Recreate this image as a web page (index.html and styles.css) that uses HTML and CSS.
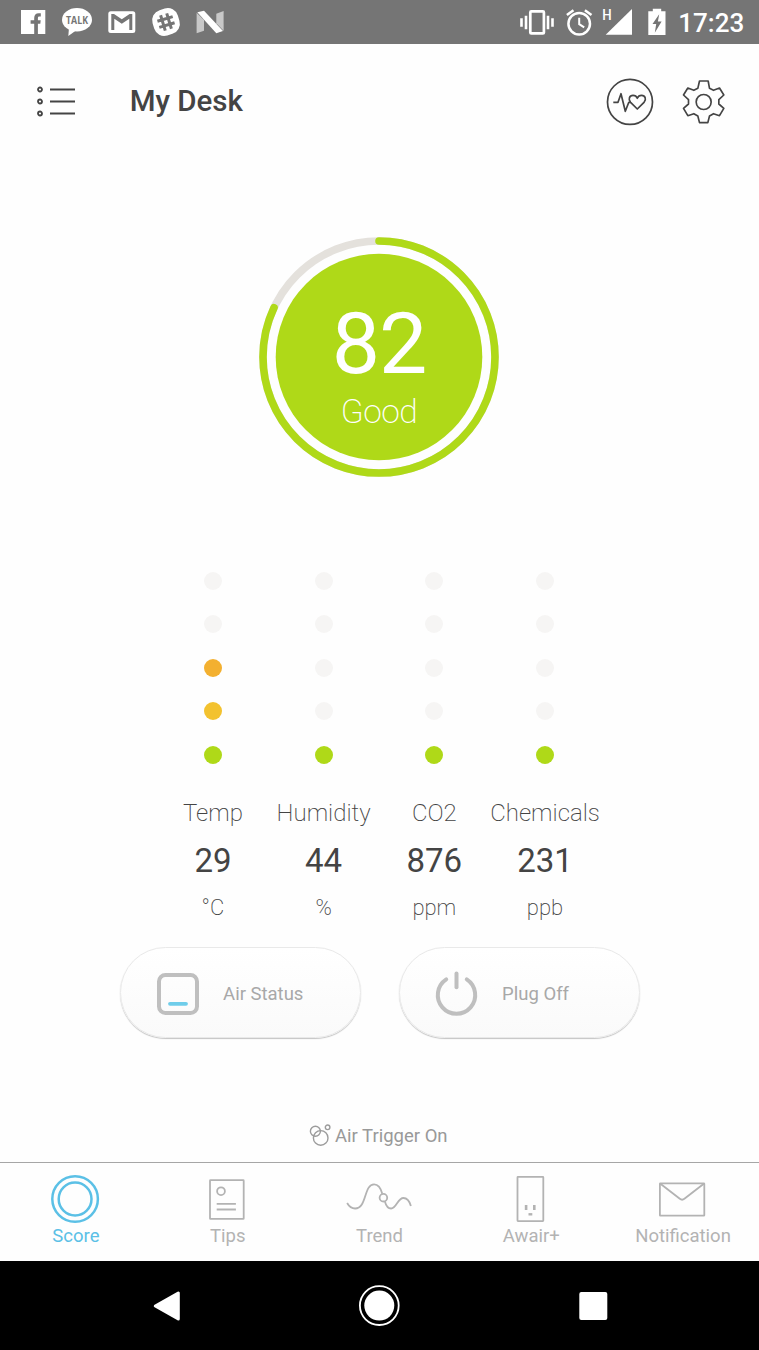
FILE: index.html
```html
<!DOCTYPE html>
<html lang="en">
<head>
  <meta charset="UTF-8" />
  <meta name="viewport" content="width=device-width, initial-scale=1.0"/>
  <title>My Desk</title>
  <link rel="stylesheet" href="styles.css">
</head>
<body>

<!-- Android status bar -->
<div class="status-bar">
  <div class="status-left">
    <svg width="30" height="30" viewBox="0 0 30 30">
      <rect x="3" y="3" width="24.3" height="24" fill="#fff"/>
      <path class="cut" d="M16.2 27V16.8H12.6V13.3H16.2V11Q16.2 6.2 20.7 6.2H22.8V9.6H21.2Q19.9 9.6 19.9 11V13.3H22.7L22.3 16.8H19.9V27Z"/>
    </svg>
    <svg width="30" height="30" viewBox="0 0 30 30">
      <ellipse cx="15" cy="12.7" rx="15" ry="11.7" fill="#fff"/>
      <path d="M7 21L6.3 29L14 23.5Z" fill="#fff"/>
      <text class="talk" x="15" y="17" textLength="22" lengthAdjust="spacingAndGlyphs">TALK</text>
    </svg>
    <svg width="30" height="30" viewBox="0 0 30 30">
      <rect x="1.3" y="4.3" width="27" height="21.7" rx="2.5" fill="#fff"/>
      <path class="cut" d="M4.3 23V7H7L14.8 12.3L22.6 7H25.3V23H22.3V11.8L14.8 16.8L7.3 11.8V23Z"/>
    </svg>
    <svg width="30" height="30" viewBox="0 0 30 30">
      <g transform="rotate(-17 15 15)">
        <rect x="1.8" y="1.8" width="26.4" height="26.4" rx="10.5" fill="#fff"/>
        <path d="M11.8 7V23M18.2 7V23M7 11.8H23M7 18.2H23" stroke="#757575" stroke-width="3"/>
      </g>
    </svg>
    <svg width="30" height="30" viewBox="0 0 30 30" fill="#fff">
      <path d="M1.6 5.7V26.3L9 23.7V13Z" opacity=".6"/>
      <path d="M21.3 6.7L28.6 4V23.7L21.3 16.3Z" opacity=".6"/>
      <path d="M2.3 5.3L9 3.7L28 24L21.3 26.3Z"/>
    </svg>
  </div>
  <div class="status-right">
    <svg width="34" height="30" viewBox="0 0 34 30">
      <rect x="10.3" y="4.4" width="13.6" height="22" rx="1" fill="none" stroke="#fff" stroke-width="2.7"/>
      <path d="M6 8.7V22.3M1.5 11.3V19.7M28 8.7V22.3M32.5 11.3V19.7" stroke="#fff" stroke-width="2.6"/>
    </svg>
    <svg width="26" height="30" viewBox="0 0 26 30" fill="none" stroke="#fff" stroke-width="2.5">
      <circle cx="13.2" cy="16.7" r="10.8"/>
      <path d="M.9 8L7.5 3.2M25.5 8L18.9 3.2"/>
      <path d="M13.2 10.8V17.2L18.2 20.3" stroke-width="2"/>
    </svg>
    <svg width="32.7" height="30" viewBox="0 0 32.7 30" fill="#fff">
      <path d="M2.7 27.7L29 2V27.7Z"/>
      <text class="net" x="-.8" y="13.4" textLength="9.4" lengthAdjust="spacingAndGlyphs">H</text>
    </svg>
    <svg width="18" height="30" viewBox="0 0 18 30">
      <path d="M.3 4.2H4.8V1.8H13.2V4.2H17.5V28H.3Z" fill="#fff"/>
      <path class="cut" d="M11.2 7.2L4.5 17H8.2L6.8 25.7L13.6 14.6H9.9Z"/>
    </svg>
    <span class="clock">17:23</span>
  </div>
</div>

<header>
  <svg class="menu-icon" width="42" height="32" viewBox="0 .5 42 32" fill="none" stroke="#444" stroke-width="1.8">
    <circle cx="5" cy="4" r="2"/><circle cx="5" cy="16" r="2"/><circle cx="5" cy="28" r="2"/>
    <path d="M15 4H40M15 16H40M15 28H40"/>
  </svg>
  <h1>My Desk</h1>
  <div class="header-actions">
    <svg width="50" height="50" viewBox="0 0 50 50" fill="none" stroke="#444" stroke-width="1.7" stroke-linejoin="round">
      <circle cx="25" cy="24.9" r="22.5"/>
      <path d="M8.3 25.3H13L16 16.7L20.3 34.3L23.8 25.3H25.6"/>
      <path d="M32.3 32L25.6 25.3C22.8 22.3 24.5 18.4 28 18.4C30.2 18.4 31.7 19.8 32.3 21.3C32.9 19.8 34.4 18.4 36.6 18.4C40.1 18.4 41.8 22.3 39 25.3Z"/>
    </svg>
    <svg width="50" height="50" viewBox="1.5 0 150 150" fill="none" stroke="#444" stroke-width="5" stroke-linejoin="round">
      <path d="M63 12H89L93 34L105 40L123 33L136 54L121 68V81L136 94L123 116L105 110L93 117L88 137H63L58 117L46 110L28 116L15 94L30 81V68L15 54L28 33L46 40L58 34Z"/>
      <circle cx="75.5" cy="75" r="22.5"/>
    </svg>
  </div>
</header>

<!-- Score ring -->
<svg class="score" width="240" height="240" viewBox="0 0 240 240">
  <circle class="ring" cx="120" cy="120" r="116"/>
  <circle class="ring ring-value" cx="120" cy="120" r="116" pathLength="100" stroke-dasharray="82 100" transform="rotate(-90 120 120)"/>
  <circle class="disc" cx="120" cy="120" r="103.3"/>
  <text class="score-number" x="120" y="135.7">82</text>
  <text class="score-label" x="120" y="185.8">Good</text>
</svg>

<!-- Sensors -->
<div class="sensors">
  <div class="sensor">
    <div class="dots"><i></i><i></i><i class="orange"></i><i class="yellow"></i><i class="green"></i></div>
    <div class="name">Temp</div>
    <div class="value">29</div>
    <div class="unit">°C</div>
  </div>
  <div class="sensor">
    <div class="dots"><i></i><i></i><i></i><i></i><i class="green"></i></div>
    <div class="name">Humidity</div>
    <div class="value">44</div>
    <div class="unit">%</div>
  </div>
  <div class="sensor">
    <div class="dots"><i></i><i></i><i></i><i></i><i class="green"></i></div>
    <div class="name">CO2</div>
    <div class="value">876</div>
    <div class="unit">ppm</div>
  </div>
  <div class="sensor">
    <div class="dots"><i></i><i></i><i></i><i></i><i class="green"></i></div>
    <div class="name">Chemicals</div>
    <div class="value">231</div>
    <div class="unit">ppb</div>
  </div>
</div>

<div class="buttons">
  <button class="pill">
    <svg width="46" height="50" viewBox="0 0 46 50" fill="none">
      <rect x="4" y="6" width="38" height="38" rx="6.5" stroke="#bfbfbf" stroke-width="4"/>
      <path d="M15 34.8H31" stroke="#6fcdea" stroke-width="3.8" stroke-linecap="round"/>
    </svg>
    <span>Air Status</span>
  </button>
  <button class="pill">
    <svg width="46" height="50" viewBox="0 0 46 50" fill="none" stroke="#bfbfbf" stroke-width="4" stroke-linecap="round">
      <path d="M12.2 10.4A18.7 18.7 0 1 0 32.8 10.4"/>
      <path d="M22.5 4.5V18.3"/>
    </svg>
    <span>Plug Off</span>
  </button>
</div>

<div class="trigger">
  <svg width="22" height="24" viewBox="0 0 22 24" fill="none" stroke="#9c9c9c" stroke-width="1.4">
    <circle cx="6.4" cy="7.2" r="5"/>
    <circle cx="11.7" cy="13.9" r="7.3"/>
    <circle cx="18.6" cy="3.3" r="2.3"/>
  </svg>
  <span>Air Trigger On</span>
</div>

<!-- Tabs -->
<nav class="tabs">
  <a class="tab active">
    <svg width="80" height="51" viewBox="0 0 80 51">
      <circle cx="39.1" cy="26" r="22.8" stroke-width="2.5"/>
      <circle cx="39.1" cy="26" r="16.4" stroke-width="2.5"/>
    </svg>
    <span>Score</span>
  </a>
  <a class="tab">
    <svg width="80" height="51" viewBox=".6 .5 80 51">
      <rect x="22.6" y="7.7" width="33.7" height="38.7" rx=".5"/>
      <circle cx="33.6" cy="18.7" r="3.9"/>
      <path d="M29.3 31.4H48.5M29.3 37H48.5"/>
    </svg>
    <span>Tips</span>
  </a>
  <a class="tab">
    <svg width="80" height="51" viewBox="-.6 0 80 51">
      <path d="M7.5 30C9.8 34 12.5 35.5 15.5 35.5C27.5 35.5 24 11.3 34.5 11.3C39 11.3 41.2 15 42.7 20.8"/>
      <circle cx="43.8" cy="24.7" r="3.8"/>
      <path d="M45.3 28.5C46.5 33 48.5 35.5 51.5 35.5C57 35.5 58 25 63.8 25C67.5 25 70 28.5 71.3 33"/>
    </svg>
    <span>Trend</span>
  </a>
  <a class="tab">
    <svg width="80" height="51" viewBox="-.3 0 80 51">
      <rect x="26.2" y="3.8" width="25.8" height="44.3" rx=".5"/>
      <path d="M34.8 32V37M43 32V37" stroke-width="2.6"/>
      <path d="M37.2 41.3H41" stroke-width="2.4"/>
    </svg>
    <span>Awair+</span>
  </a>
  <a class="tab">
    <svg width="80" height="51" viewBox="0 0 80 51">
      <rect x="16.9" y="10.3" width="44.4" height="32.4" rx=".5"/>
      <path d="M17.4 10.8L36.8 25.8Q39.1 27.6 41.4 25.8L60.8 10.8"/>
    </svg>
    <span>Notification</span>
  </a>
</nav>

<!-- Android navigation -->
<div class="nav-bar">
  <svg width="42" height="42" viewBox="0 0 42 42">
    <path d="M10.3 21L33.3 8V34Z" fill="#fff" stroke="#fff" stroke-width="3" stroke-linejoin="round"/>
  </svg>
  <svg width="42" height="42" viewBox=".7 0 42 42">
    <circle cx="21" cy="20.6" r="19.4" fill="none" stroke="#fff" stroke-width="1.8"/>
    <circle cx="21" cy="20.6" r="15" fill="#fff"/>
  </svg>
  <svg width="42" height="42" viewBox=".7 0 42 42">
    <rect x="7" y="7" width="28" height="28" rx="2" fill="#fff"/>
  </svg>
</div>

</body>
</html>
```

FILE: styles.css
```css
* {
  box-sizing: border-box;
}

body {
  font-family: Roboto, sans-serif;
  background: #fefefe;
  color: #444;
  margin: 0;
  height: 1350px;
  display: flex;
  flex-direction: column;
  overflow: hidden;
}

svg {
  display: block;
  flex-shrink: 0;
  overflow: visible;
}

/* status bar */
.status-bar {
  height: 44px;
  background: #757575;
  display: flex;
  justify-content: space-between;
  align-items: center;
  padding: 0 17px 0 18.2px;
}

.status-left {
  display: flex;
  gap: 14.3px;
}

.status-right {
  display: flex;
  align-items: center;
  gap: 11.5px;
}

.cut { fill: #757575; }

.talk {
  font: bold 10.5px "Open Sans", sans-serif;
  fill: #757575;
  text-anchor: middle;
}

.net {
  font-size: 14px;
  font-weight: 500;
}

.clock {
  width: 65px;
  padding: 2px 0 0 1.3px;
  color: white;
  font-size: 26px;
  font-weight: 500;
  line-height: 30px;
  white-space: nowrap;
}

/* header */
header {
  height: 115px;
  display: flex;
  align-items: center;
  padding: 0 30.5px 0 35px;
}

header h1 {
  margin: 0 0 2px 52.7px;
  font-size: 29.5px;
  font-weight: 500;
  line-height: 36px;
}

.header-actions {
  margin-left: auto;
  display: flex;
  gap: 23.5px;
}

/* score */
.score {
  margin: 78px 0 0 259.2px;
}

.ring {
  fill: none;
  stroke: #e4e1dc;
  stroke-width: 7.6;
}

.ring-value {
  stroke: #afd918;
  stroke-linecap: round;
}

.disc { fill: #afd918; }

.score text {
  fill: white;
  text-anchor: middle;
}

.score-number {
  font-size: 86px;
  letter-spacing: -1px;
}

.score-label {
  font-size: 33.5px;
  font-weight: 200;
  letter-spacing: -.5px;
}

/* sensors */
.sensors {
  display: grid;
  grid-template-columns: repeat(4, 110.7px);
  margin: 95px 0 0 157.6px;
  text-align: center;
}

.dots {
  display: flex;
  flex-direction: column;
  align-items: center;
  gap: 25.4px;
}

.dots i {
  width: 18px;
  height: 18px;
  border-radius: 50%;
  background: #f6f5f4;
}

.dots .orange { background: #f3b030; }
.dots .yellow { background: #f3c22f; }
.dots .green { background: #afd918; }

.name {
  margin-top: 34.4px;
  font-size: 24px;
  font-weight: 200;
  line-height: 30px;
}

.value {
  margin-top: 13px;
  font-size: 33px;
  line-height: 40px;
}

.unit {
  margin-top: 12.5px;
  font-size: 22px;
  font-weight: 200;
  line-height: 30px;
}

/* buttons */
.buttons {
  display: flex;
  gap: 38px;
  margin: 23.5px 0 0 119.6px;
}

.pill {
  width: 241px;
  height: 91px;
  display: flex;
  align-items: center;
  padding: 3px 0 0 34px;
  border: 1px solid #e9e9e9;
  border-radius: 46px;
  box-shadow: 0 1px 1px #c4c4c4;
  background: linear-gradient(#fff, #fafafa);
  color: #a8a8a8;
  font: 18.5px/24px Roboto, sans-serif;
}

.pill span {
  margin-left: 22.5px;
  padding-top: 1px;
}

.trigger {
  display: flex;
  gap: 4.5px;
  margin: 85.9px 0 0 308.5px;
  color: #999;
  font-size: 18.5px;
  line-height: 24px;
}

/* tabs */
.tabs {
  margin-top: auto;
  height: 99px;
  display: flex;
  border-top: 1px solid #a6a6a6;
}

.tab {
  flex: 1;
  display: flex;
  flex-direction: column;
  align-items: center;
  padding-top: 10px;
  color: #b3b3b3;
  font-size: 18.5px;
  line-height: 25px;
}

.tab svg {
  fill: none;
  stroke: currentColor;
  stroke-width: 1.8;
}

.tab.active { color: #5bc0e6; }

/* bottom navigation */
.nav-bar {
  height: 89px;
  background: #000;
  display: flex;
  justify-content: space-between;
  align-items: center;
  padding: 0 144.5px;
}
```
